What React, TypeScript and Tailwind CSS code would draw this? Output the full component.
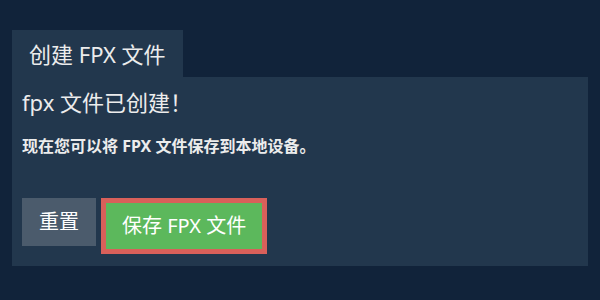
const App = () => {
  return (
    <div className="w-[600px] h-[300px] bg-[#11233a] pt-[30px] px-[12px] text-[#ececec] font-['Noto_Sans','Noto_Sans_CJK_SC',sans-serif]">
      {/* Tab */}
      <div className="inline-flex items-center h-[47px] px-[17px] bg-[#22374d] text-[22px] leading-none">
        创建 FPX 文件
      </div>

      {/* Panel */}
      <div className="bg-[#22374d] p-[10px] h-[189px]">
        <h2 className="text-[22px] leading-[30px] font-normal">fpx 文件已创建！</h2>
        <p className="mt-[17px] text-[16px] leading-[24px] font-bold">
          现在您可以将 FPX 文件保存到本地设备。
        </p>

        <div className="flex items-start gap-[5px] mt-[40px]">
          <button className="h-[48px] px-[17px] bg-[#4b5b6c] text-[20px] text-white leading-none">
            重置
          </button>
          <button className="h-[56px] px-[16px] bg-[#5cb85c] border-[5px] border-[#d9605a] text-[20px] text-white leading-none">
            保存 FPX 文件
          </button>
        </div>
      </div>
    </div>
  );
};

export default App;
